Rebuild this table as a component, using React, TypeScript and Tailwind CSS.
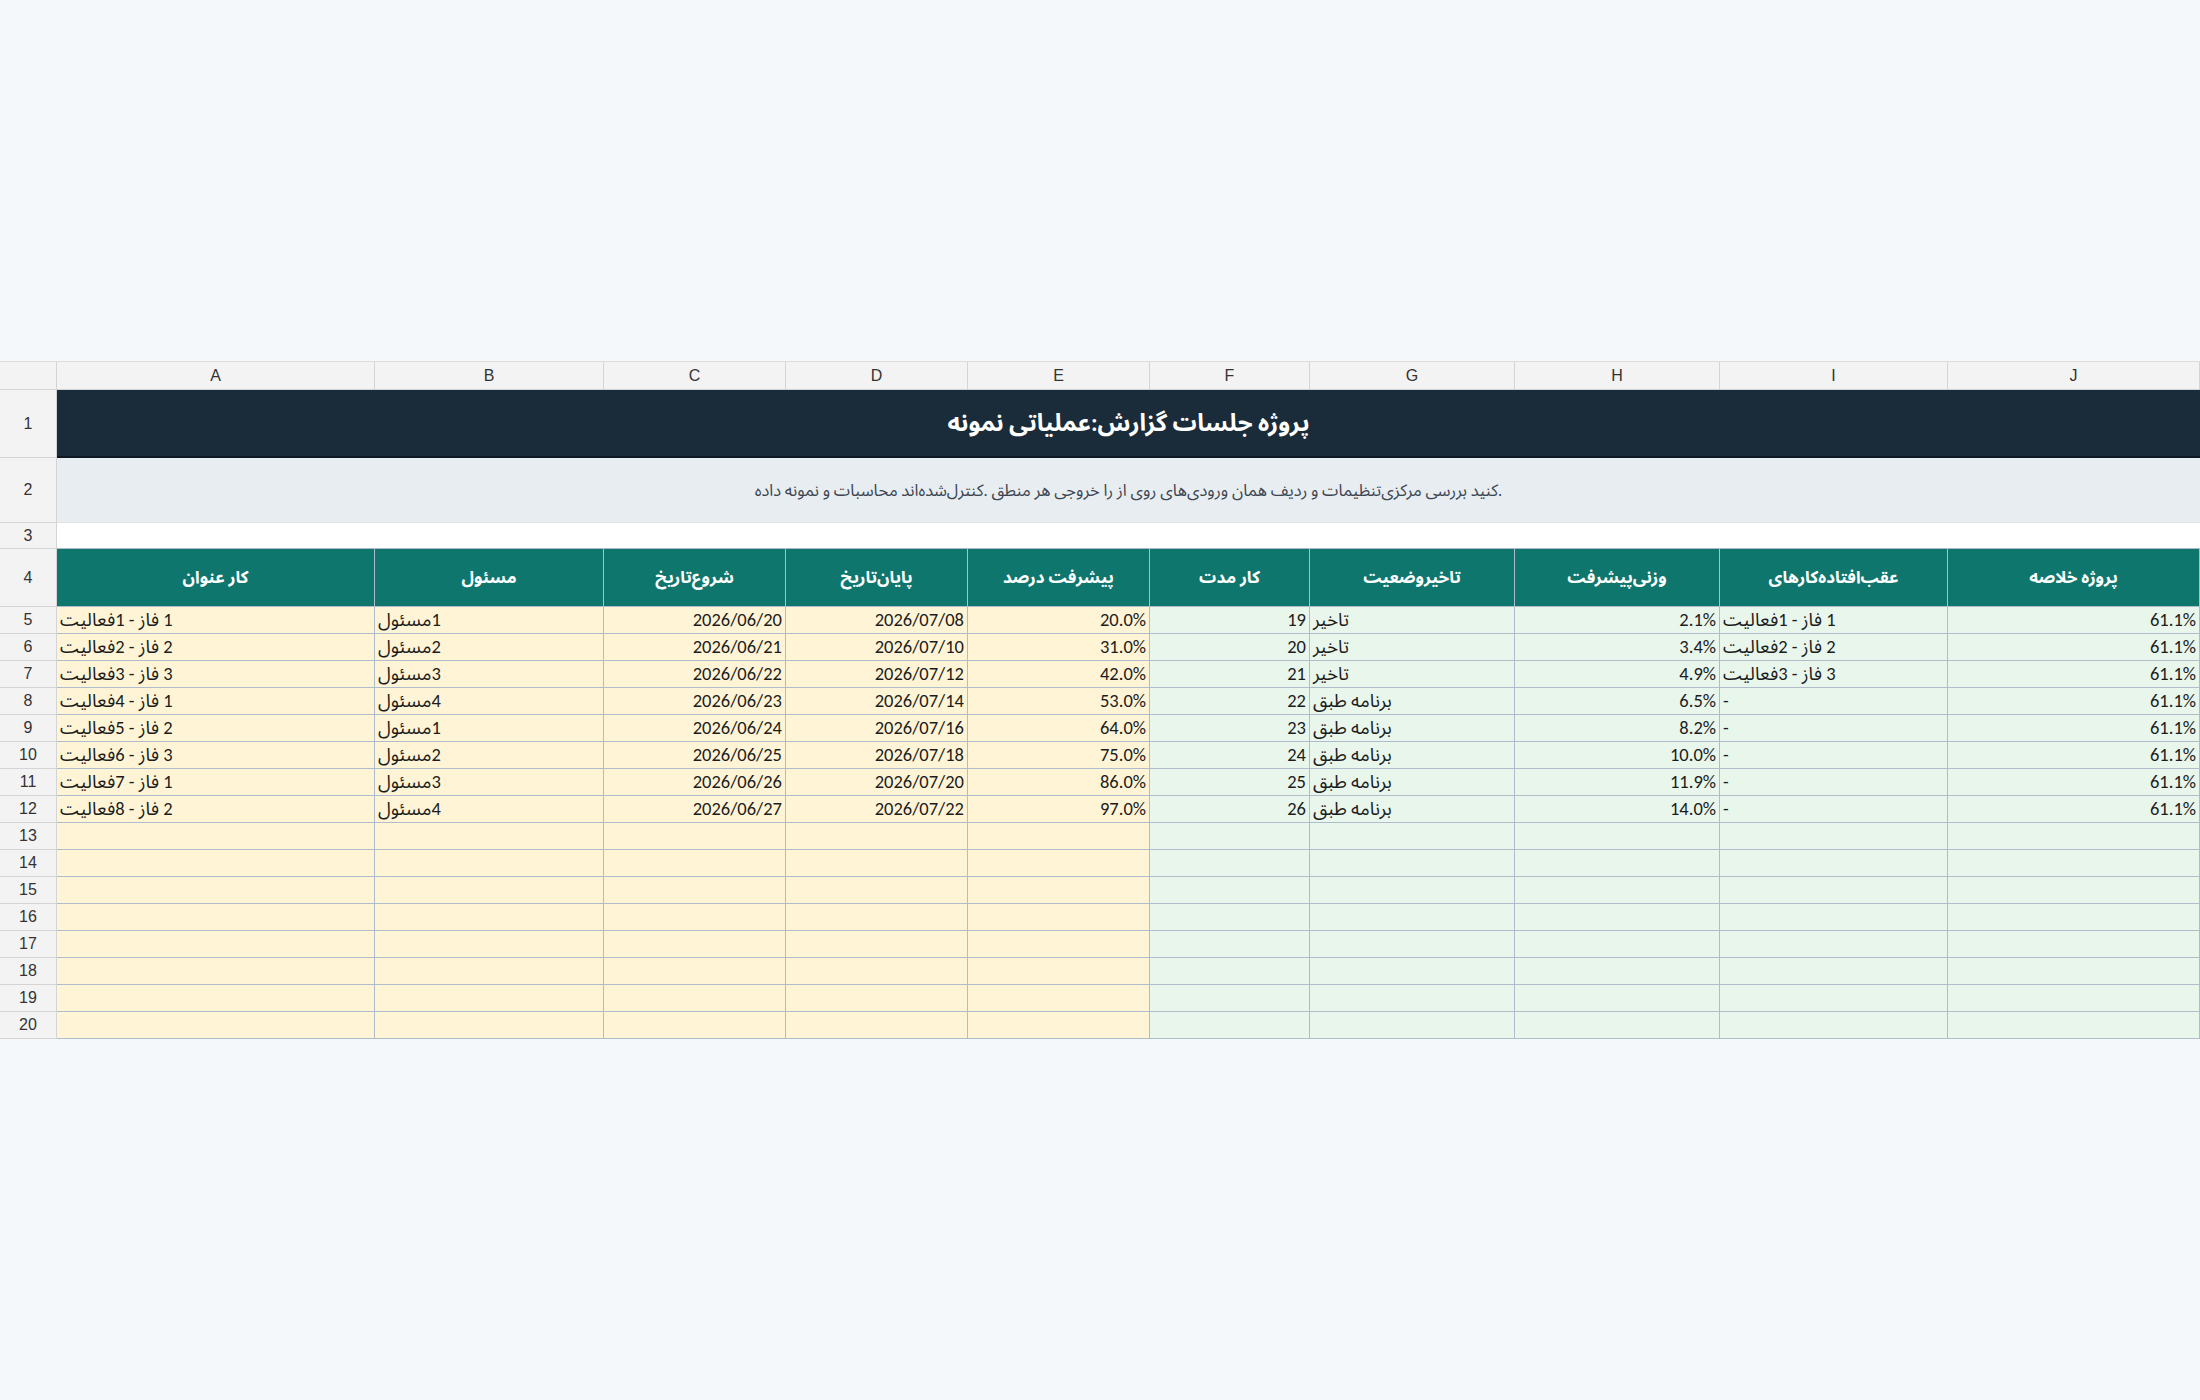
import React from "react";

const COLS = ["A", "B", "C", "D", "E", "F", "G", "H", "I", "J"];

const HEADERS = [
  "کار عنوان",
  "مسئول",
  "شروع‌تاریخ",
  "پایان‌تاریخ",
  "پیشرفت درصد",
  "کار مدت",
  "تاخیر‌وضعیت",
  "وزنی‌پیشرفت",
  "عقب‌افتاده‌کارهای",
  "پروژه خلاصه",
];

type Row = {
  task: string;
  owner: string;
  start: string;
  end: string;
  progress: string;
  duration: number;
  status: string;
  weighted: string;
  delayed: string;
};

const ROWS: Row[] = [
  { task: "1 فاز - 1فعالیت", owner: "1مسئول", start: "2026/06/20", end: "2026/07/08", progress: "20.0%", duration: 19, status: "تاخیر", weighted: "2.1%", delayed: "1 فاز - 1فعالیت" },
  { task: "2 فاز - 2فعالیت", owner: "2مسئول", start: "2026/06/21", end: "2026/07/10", progress: "31.0%", duration: 20, status: "تاخیر", weighted: "3.4%", delayed: "2 فاز - 2فعالیت" },
  { task: "3 فاز - 3فعالیت", owner: "3مسئول", start: "2026/06/22", end: "2026/07/12", progress: "42.0%", duration: 21, status: "تاخیر", weighted: "4.9%", delayed: "3 فاز - 3فعالیت" },
  { task: "1 فاز - 4فعالیت", owner: "4مسئول", start: "2026/06/23", end: "2026/07/14", progress: "53.0%", duration: 22, status: "برنامه طبق", weighted: "6.5%", delayed: "-" },
  { task: "2 فاز - 5فعالیت", owner: "1مسئول", start: "2026/06/24", end: "2026/07/16", progress: "64.0%", duration: 23, status: "برنامه طبق", weighted: "8.2%", delayed: "-" },
  { task: "3 فاز - 6فعالیت", owner: "2مسئول", start: "2026/06/25", end: "2026/07/18", progress: "75.0%", duration: 24, status: "برنامه طبق", weighted: "10.0%", delayed: "-" },
  { task: "1 فاز - 7فعالیت", owner: "3مسئول", start: "2026/06/26", end: "2026/07/20", progress: "86.0%", duration: 25, status: "برنامه طبق", weighted: "11.9%", delayed: "-" },
  { task: "2 فاز - 8فعالیت", owner: "4مسئول", start: "2026/06/27", end: "2026/07/22", progress: "97.0%", duration: 26, status: "برنامه طبق", weighted: "14.0%", delayed: "-" },
];

const EMPTY_ROWS = [13, 14, 15, 16, 17, 18, 19, 20];

const cellFont = {
  fontFamily: "Calibri, Carlito, 'Noto Sans Arabic', 'Noto Naskh Arabic', sans-serif",
};

function RowNum({ n }: { n: number }) {
  return (
    <div className="flex items-center justify-center border-r border-b border-[#d4d4d4] bg-[#f3f3f3] font-['Liberation_Sans',Arial,sans-serif] text-[16px] text-[#333]">
      {n}
    </div>
  );
}

function Cell({
  children,
  tone,
  align = "right",
  rtl = false,
}: {
  children?: React.ReactNode;
  tone: "y" | "g";
  align?: "left" | "right";
  rtl?: boolean;
}) {
  return (
    <div
      dir={rtl ? "rtl" : "ltr"}
      style={cellFont}
      className={`flex items-center overflow-hidden whitespace-nowrap border-r border-b border-[#aebccb] px-[3px] pt-[1px] text-[18.5px] leading-none text-[#1c1c1c] ${
        tone === "y" ? "bg-[#fff5d6]" : "bg-[#e9f6ec]"
      } ${align === "left" ? "justify-start text-left" : "justify-end text-right"}`}
    >
      {rtl ? <span className="w-full text-left">{children}</span> : children}
    </div>
  );
}

export default function App() {
  return (
    <div className="flex min-h-screen items-center bg-[#f5f8fa]">
      <div className="grid w-[2200px] grid-cols-[57px_318px_229px_182px_182px_182px_160px_205px_205px_228px_252px] grid-rows-[28px_68px_65px_26px_58px_repeat(16,27px)] border-t border-[#dcdcdc]">
        {/* column letters */}
        <div className="border-r border-b border-[#d4d4d4] bg-[#f3f3f3]" />
        {COLS.map((c) => (
          <div
            key={c}
            className="flex items-center justify-center border-r border-b border-[#d4d4d4] bg-[#f3f3f3] font-['Liberation_Sans',Arial,sans-serif] text-[16px] text-[#333]"
          >
            {c}
          </div>
        ))}

        {/* title */}
        <RowNum n={1} />
        <div
          dir="rtl"
          style={cellFont}
          className="col-span-10 flex items-center justify-center border-b-2 border-[#0d1822] bg-[#1a2b3a] text-[24px] font-bold text-white"
        >
          پروژه جلسات گزارش:عملیاتی نمونه
        </div>

        {/* description */}
        <RowNum n={2} />
        <div
          dir="rtl"
          style={cellFont}
          className="col-span-10 flex items-center justify-center border-b border-[#dde3e8] bg-[#e8edf1] text-[16.5px] text-[#3b4651]"
        >
          .کنید بررسی مرکزی‌تنظیمات و ردیف همان ورودی‌های روی از را خروجی هر منطق .کنترل‌شده‌اند محاسبات و نمونه داده
        </div>

        {/* spacer */}
        <RowNum n={3} />
        <div className="col-span-10 border-b border-[#aebccb] bg-white" />

        {/* headers */}
        <RowNum n={4} />
        {HEADERS.map((h) => (
          <div
            key={h}
            dir="rtl"
            style={cellFont}
            className="flex items-center justify-center border-r border-b border-[#aebccb] bg-[#0f766e] text-[17px] font-bold text-white"
          >
            {h}
          </div>
        ))}

        {ROWS.map((r, i) => (
          <React.Fragment key={i}>
            <RowNum n={i + 5} />
            <Cell tone="y" align="left" rtl>
              {r.task}
            </Cell>
            <Cell tone="y" align="left" rtl>
              {r.owner}
            </Cell>
            <Cell tone="y">{r.start}</Cell>
            <Cell tone="y">{r.end}</Cell>
            <Cell tone="y">{r.progress}</Cell>
            <Cell tone="g">{r.duration}</Cell>
            <Cell tone="g" align="left" rtl>
              {r.status}
            </Cell>
            <Cell tone="g">{r.weighted}</Cell>
            <Cell tone="g" align="left" rtl>
              {r.delayed}
            </Cell>
            <Cell tone="g">61.1%</Cell>
          </React.Fragment>
        ))}

        {EMPTY_ROWS.map((n) => (
          <React.Fragment key={n}>
            <RowNum n={n} />
            <Cell tone="y" />
            <Cell tone="y" />
            <Cell tone="y" />
            <Cell tone="y" />
            <Cell tone="y" />
            <Cell tone="g" />
            <Cell tone="g" />
            <Cell tone="g" />
            <Cell tone="g" />
            <Cell tone="g" />
          </React.Fragment>
        ))}
      </div>
    </div>
  );
}
